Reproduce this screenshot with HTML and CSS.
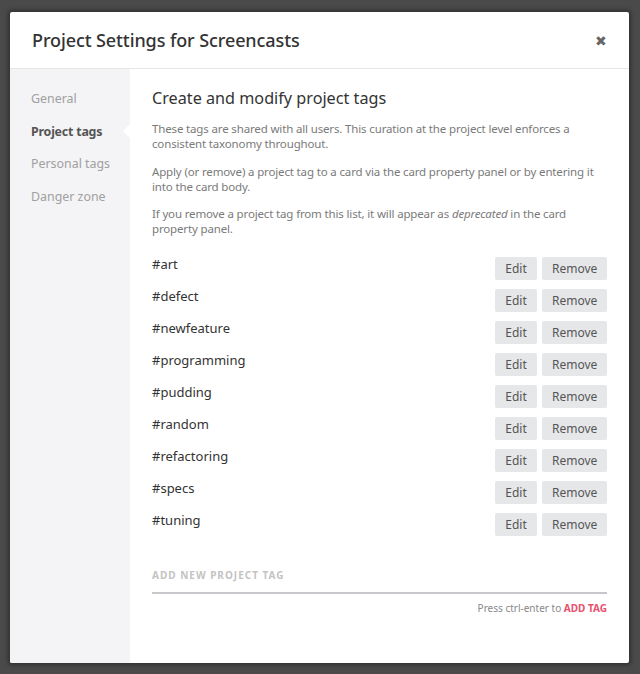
FILE: index.html
```html
<!DOCTYPE html>
<html>
<head>
<meta charset="utf-8">
<link rel="stylesheet" href="styles.css">
</head>
<body>
<div class="modal">
  <div class="header">
    <h1 class="title">Project Settings for Screencasts</h1>
    <span class="close">✖</span>
  </div>
  <div class="body">
    <nav class="sidebar">
      <a class="nav-item">General</a>
      <a class="nav-item active">Project tags</a>
      <a class="nav-item">Personal tags</a>
      <a class="nav-item">Danger zone</a>
    </nav>
    <main class="content">
      <h2 class="heading">Create and modify project tags</h2>
      <p class="desc">These tags are shared with all users. This curation at the project level enforces a consistent taxonomy throughout.</p>
      <p class="desc">Apply (or remove) a project tag to a card via the card property panel or by entering it into the card body.</p>
      <p class="desc">If you remove a project tag from this list, it will appear as <em>deprecated</em> in the card property panel.</p>
      <ul class="tags">
        <li class="tag"><span class="tag-name">#art</span><span class="btns"><button class="btn">Edit</button><button class="btn">Remove</button></span></li>
        <li class="tag"><span class="tag-name">#defect</span><span class="btns"><button class="btn">Edit</button><button class="btn">Remove</button></span></li>
        <li class="tag"><span class="tag-name">#newfeature</span><span class="btns"><button class="btn">Edit</button><button class="btn">Remove</button></span></li>
        <li class="tag"><span class="tag-name">#programming</span><span class="btns"><button class="btn">Edit</button><button class="btn">Remove</button></span></li>
        <li class="tag"><span class="tag-name">#pudding</span><span class="btns"><button class="btn">Edit</button><button class="btn">Remove</button></span></li>
        <li class="tag"><span class="tag-name">#random</span><span class="btns"><button class="btn">Edit</button><button class="btn">Remove</button></span></li>
        <li class="tag"><span class="tag-name">#refactoring</span><span class="btns"><button class="btn">Edit</button><button class="btn">Remove</button></span></li>
        <li class="tag"><span class="tag-name">#specs</span><span class="btns"><button class="btn">Edit</button><button class="btn">Remove</button></span></li>
        <li class="tag"><span class="tag-name">#tuning</span><span class="btns"><button class="btn">Edit</button><button class="btn">Remove</button></span></li>
      </ul>
      <div class="new-tag">
        <div class="new-input">ADD NEW PROJECT TAG</div>
        <div class="hint">Press ctrl-enter to <span class="hint-action">ADD TAG</span></div>
      </div>
    </main>
  </div>
</div>
</body>
</html>
```
FILE: styles.css
```css
html, body {
  margin: 0;
  padding: 0;
  height: 100%;
}
body {
  background: #4a4a4a;
  font-family: "Noto Sans", "Open Sans", sans-serif;
  padding: 12px 11px 11px 10px;
  box-sizing: border-box;
}
.modal {
  background: #fff;
  height: 651px;
  display: flex;
  flex-direction: column;
  box-shadow: 0 0 4px 2px rgba(0,0,0,0.35);
  border-radius: 2px;
  overflow: hidden;
}
.header {
  height: 56px;
  border-bottom: 1px solid #e6e6e6;
  display: flex;
  align-items: center;
  justify-content: space-between;
  padding: 0 22px 0 22px;
  flex-shrink: 0;
}
.title {
  margin: 0;
  font-size: 18px;
  font-weight: 500;
  color: #333;
  letter-spacing: -0.1px;
}
.close {
  font-size: 14px;
  color: #666;
}
.body {
  flex: 1;
  display: flex;
}
.sidebar {
  width: 120px;
  background: #f4f4f6;
  padding-top: 21px;
  display: flex;
  flex-direction: column;
  flex-shrink: 0;
}
.nav-item {
  position: relative;
  font-size: 12.4px;
  color: #a0a0a0;
  padding: 0 0 0 21px;
  height: 32.6px;
  line-height: 18px;
}
.nav-item.active {
  color: #555;
  font-weight: 700;
  letter-spacing: -0.2px;
}
.nav-item.active::after {
  content: "";
  position: absolute;
  right: 0;
  top: 1px;
  border-top: 7px solid transparent;
  border-bottom: 7px solid transparent;
  border-right: 7px solid #fff;
}
.content {
  flex: 1;
  padding: 18px 22px 0 22px;
}
.heading {
  margin: 0 0 12px 0;
  font-size: 16.2px;
  font-weight: 400;
  color: #333;
}
.desc {
  margin: 0 0 12.5px 0;
  font-size: 11.5px;
  letter-spacing: -0.15px;
  line-height: 15px;
  color: #7a7a7a;
}
.tags {
  list-style: none;
  margin: 19.5px 0 0 0;
  padding: 0;
}
.tag {
  display: flex;
  justify-content: space-between;
  align-items: flex-start;
  height: 32px;
}
.tag-name {
  font-size: 13px;
  color: #333;
  line-height: 16px;
}
.btns {
  display: flex;
  gap: 5px;
  margin-top: 1px;
}
.btn {
  border: none;
  background: #e6e7e9;
  border-radius: 2px;
  height: 23px;
  font-family: inherit;
  font-size: 12px;
  color: #555;
  padding: 0 10px;
}
.btn:first-child {
  width: 42px;
}
.btn:last-child {
  width: 65px;
}
.new-tag {
  margin-top: 24px;
}
.new-input {
  font-size: 10px;
  font-weight: 700;
  color: #c3c3c3;
  letter-spacing: 1px;
  padding-bottom: 10px;
  border-bottom: 2px solid #c8c8cc;
}
.hint {
  text-align: right;
  font-size: 10px;
  color: #888;
  margin-top: 7px;
}
.hint-action {
  color: #e8506e;
  font-weight: 700;
}
```
